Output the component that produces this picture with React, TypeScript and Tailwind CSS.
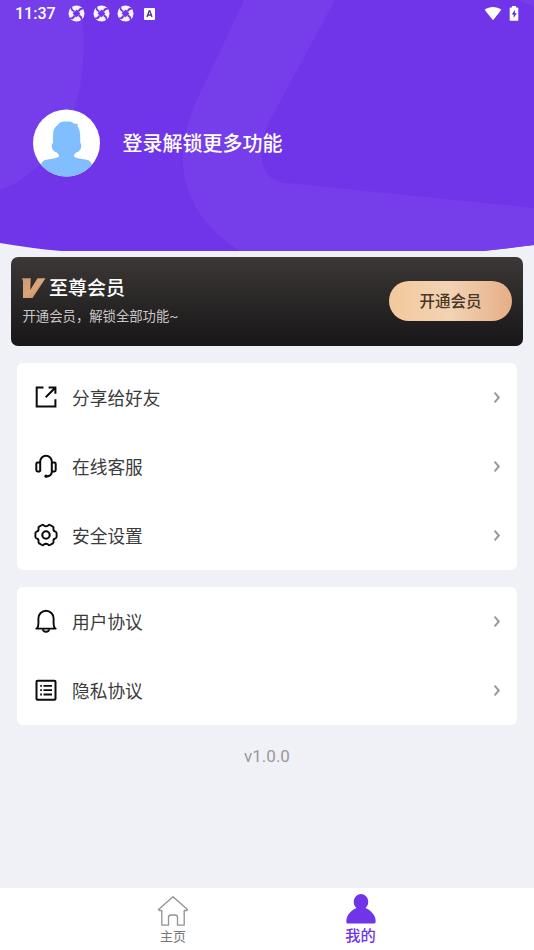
import type { ReactNode } from "react";

type MenuItem = {
  label: string;
  icon: ReactNode;
};

const ShareIcon = () => (
  <svg className="h-6 w-6" viewBox="0 0 24 24" fill="none" stroke="#0a0a0a" strokeWidth="2">
    <path d="M9.5 2.6H2.7v18.9h18.7v-7.2" />
    <path d="M11.7 12.2 21 3M14.6 2.6h6.8v6.2" />
  </svg>
);

const HeadsetIcon = () => (
  <svg className="h-6 w-6" viewBox="0 0 24 24" fill="none" stroke="#0a0a0a" strokeWidth="2">
    <path d="M6.2 17.8V7.6a5.8 5.8 0 0 1 11.6 0v10.2c0 2.8-1.7 4.5-5.4 4.6" />
    <path d="M6 8.6H3.6a1.3 1.3 0 0 0-1.3 1.3v6.2a1.3 1.3 0 0 0 1.3 1.3H6M18 8.6h2.4a1.3 1.3 0 0 1 1.3 1.3v6.2a1.3 1.3 0 0 1-1.3 1.3H18" />
    <circle cx="12" cy="22.2" r="1.6" fill="#0a0a0a" stroke="none" />
  </svg>
);

const GearIcon = () => (
  <svg className="h-6 w-6" viewBox="0 0 24 24" fill="none" stroke="#0a0a0a" strokeWidth="1.9" strokeLinejoin="round">
    <path d="M8 2Q9 1.5 9.8 2.4Q12 4.2 14.2 2.4Q15 1.5 16 2L18.8 3.6Q19.9 4.4 19.5 5.6Q19 8 21.4 8.7Q22.6 9.1 22.6 10.3V13.7Q22.6 14.9 21.4 15.3Q19 16 19.5 18.4Q19.9 19.6 18.8 20.4L16 22Q15 22.5 14.2 21.6Q12 19.8 9.8 21.6Q9 22.5 8 22L5.2 20.4Q4.1 19.6 4.5 18.4Q5 16 2.6 15.3Q1.4 14.9 1.4 13.7V10.3Q1.4 9.1 2.6 8.7Q5 8 4.5 5.6Q4.1 4.4 5.2 3.6Z" />
    <circle cx="12" cy="12" r="3.7" strokeWidth="2.1" />
  </svg>
);

const BellIcon = () => (
  <svg className="h-6 w-6" viewBox="0 0 24 24" fill="none" stroke="#0a0a0a" strokeWidth="1.9">
    <path d="M2.3 19.6h19.4" strokeLinecap="round" />
    <path d="M3 19.4C4.3 17.8 4.4 16.4 4.4 14.4V9.4a7.6 7.6 0 0 1 15.2 0v5c0 2 .1 3.4 1.4 5" />
    <path d="M9 20.3a3 2.5 0 0 0 6 0" />
  </svg>
);

const ListIcon = () => (
  <svg className="h-6 w-6" viewBox="0 0 24 24" fill="none" stroke="#0a0a0a" strokeWidth="2">
    <rect x="2.5" y="2.7" width="19" height="19" rx="1" />
    <path d="M6.2 7.9h1.7M9.5 7.9H18M6.2 12.2h1.7M9.5 12.2H18M6.2 16.5h1.7M9.5 16.5H18" strokeWidth="1.8" />
  </svg>
);

const SwirlIcon = () => (
  <svg className="h-[17px] w-[17px]" viewBox="0 0 17 17">
    <circle cx="8.5" cy="8.5" r="8" fill="#f8f4ff" />
    <g fill="#7035e8" transform="rotate(38 8.5 8.5)">
      <rect x="5.7" y="5.7" width="5.6" height="5.6" transform="rotate(12 8.5 8.5)" />
      <path d="M8.2 6 9.7 5.2Q8.8 2.7 11.4.7L9.6.3Q6.4 2.4 8.2 6Z" />
      <path d="M11 8.2 11.8 9.7Q14.3 8.8 16.3 11.4L16.7 9.6Q14.6 6.4 11 8.2Z" />
      <path d="M8.8 11 7.3 11.8Q8.2 14.3 5.6 16.3L7.4 16.7Q10.6 14.6 8.8 11Z" />
      <path d="M6 8.8 5.2 7.3Q2.7 8.2.7 5.6L.3 7.4Q2.4 10.6 6 8.8Z" />
    </g>
  </svg>
);

const serviceItems: MenuItem[] = [
  { label: "分享给好友", icon: <ShareIcon /> },
  { label: "在线客服", icon: <HeadsetIcon /> },
  { label: "安全设置", icon: <GearIcon /> },
];

const agreementItems: MenuItem[] = [
  { label: "用户协议", icon: <BellIcon /> },
  { label: "隐私协议", icon: <ListIcon /> },
];

const StatusBar = () => (
  <div className="flex h-[27px] items-center justify-between pl-[15px] pr-[15px] text-white">
    <div className="flex items-center">
      <span className="w-[53px] pt-px text-[16px] font-medium leading-[26px]">11:37</span>
      <div className="flex items-center gap-[7.5px]">
        <SwirlIcon />
        <SwirlIcon />
        <SwirlIcon />
      </div>
      <svg className="ml-[10px] h-3 w-[11px]" viewBox="0 0 11 12">
        <rect width="11" height="12" rx="1" fill="#fff" />
        <path d="M3 9 5.1 3h.8L8 9M3.9 7h3.2" fill="none" stroke="#553099" strokeWidth="1.3" />
      </svg>
    </div>
    <div className="flex items-center gap-[7px]">
      <svg className="h-[14px] w-[18px]" viewBox="0 0 18 14">
        <path d="M.6 2.7C5.6-.9 12.4-.9 17.4 2.7L9 13.2Z" fill="#fff" />
      </svg>
      <svg className="h-4 w-[10px]" viewBox="0 0 10 16">
        <path d="M3 0h4v1.4h1.4q.9 0 .9.9v11.6q0 .9-.9.9H1.6q-.9 0-.9-.9V2.3q0-.9.9-.9H3Z" fill="#fff" />
        <path d="M6 3.7 2.8 8.5h1.9v3.6l3-4.9H5.8Z" fill="#5b2fc4" />
      </svg>
    </div>
  </div>
);

const Header = () => (
  <div className="relative h-[251px]">
    <svg className="absolute inset-0 h-full w-full" viewBox="0 0 534 251">
      <path d="M0 0H534V245Q510 248 483 251H61Q29 248 0 243Z" fill="#7035e8" />
      <path d="M0 0H80C89 60 83 135 31 172Q17 184 0 190Z" fill="#763eea" />
      <path
        d="M244 0H335L270 120C256 150 258 181 287 183L534 208V245Q510 248 483 251H240C203 228 185 197 183 164C182 135 190 112 208 77Z"
        fill="#763eea"
      />
      <path d="M518 0H534V7Z" fill="#763eea" />
    </svg>
    <div className="relative">
      <StatusBar />
      <div className="flex items-center pl-[33px] pt-[82px]">
        <svg className="h-[68px] w-[67px]" viewBox="0 0 67 68">
          <clipPath id="avatar">
            <ellipse cx="33.5" cy="34" rx="33.5" ry="33.5" />
          </clipPath>
          <g clipPath="url(#avatar)">
            <rect width="67" height="68" fill="#fff" />
            <path
              d="M20 31Q19.5 22 22 18.5L25.5 15Q27 12.5 31 12.5L37 12.5Q39 13 41 14.5L45 15L44.3 17Q47.5 20 47.3 31V34Q48.8 35 48 39Q46.5 43 43.5 43.3L41 46V47.5Q43 49.5 54 50.8Q58.5 52 59 57V68H8V57Q8 52 13 50.8Q24 49.5 26 47.5V46L23.5 43.3Q20.5 43 19 39Q18.2 35 20 34Z"
              fill="#81beff"
            />
          </g>
        </svg>
        <h1 className="ml-[22.5px] pt-px text-[20px] font-medium leading-7 text-white">登录解锁更多功能</h1>
      </div>
    </div>
  </div>
);

const VipCard = () => (
  <div className="mx-[11px] mt-[6px] flex h-[89px] items-start justify-between rounded-[7px] bg-linear-to-b from-[#3c3837] to-[#181617] pl-[11px] pr-[11px]">
    <div className="pt-[18px]">
      <div className="flex items-center">
        <svg className="mb-[2px] h-5 w-6" viewBox="0 0 24 20">
          <defs>
            <linearGradient id="vip" x1="0" y1="0" x2="1" y2="1">
              <stop offset="0" stopColor="#c9986f" />
              <stop offset="0.5" stopColor="#dca579" />
              <stop offset="1" stopColor="#b98961" />
            </linearGradient>
          </defs>
          <path d="M0 .3H8.8L8.2 12 15.5.3H23.5L10.5 20H1V3.2Z" fill="url(#vip)" />
        </svg>
        <h2 className="ml-[3px] text-[19px] font-medium leading-7 text-white">至尊会员</h2>
      </div>
      <p className="ml-[0.5px] mt-[4px] text-[13.35px] leading-5 text-[#c9c7c7]">开通会员，解锁全部功能~</p>
    </div>
    <button className="mt-6 h-[40px] w-[123px] rounded-full bg-linear-to-r from-[#f3c99c] via-[#f2d3b3] via-50% to-[#e6ae87] pt-[4px] text-[15.5px] font-medium text-[#493627]">
      开通会员
    </button>
  </div>
);

const MenuCard = ({ items }: { items: MenuItem[] }) => (
  <div className="mx-[17px] mt-[17px] rounded-[6px] bg-white">
    {items.map((item) => (
      <div key={item.label} className="flex h-[69px] items-center pb-px pl-[17px] pr-[16px]">
        {item.icon}
        <span className="ml-[14px] flex-1 pt-[3px] text-[17.7px] leading-7 text-[#3b3b3b]">{item.label}</span>
        <svg className="h-3 w-2" viewBox="0 0 8 12" fill="none" stroke="#999" strokeWidth="2">
          <path d="M1.6 1.7 5.8 6.5 1.6 11.3" />
        </svg>
      </div>
    ))}
  </div>
);

const TabBar = () => (
  <div className="flex h-[62px] justify-center bg-white">
    <div className="flex w-[188px] flex-col items-center pt-[7px] text-[#777]">
      <svg className="h-8 w-8" viewBox="0 0 32 32" fill="none" stroke="#929292" strokeWidth="1.3" strokeLinejoin="round">
        <path d="M16 1.8 1.5 14.5 2.2 15.5H4.8V30.2H11.5V22.5Q11.5 20 14 20H18Q20.5 20 20.5 22.5V30.2H27.2V15.5H29.8L30.5 14.5Z" />
      </svg>
      <span className="text-[13px] leading-5">主页</span>
    </div>
    <div className="mr-[1px] flex w-[187px] flex-col items-center pt-[6px] text-[#7035e8]">
      <svg className="h-[30px] w-[30px]" viewBox="0 0 30 30" fill="currentColor">
        <path d="M1.5 29.5C0 29.5 .1 26 1 23.5C2.6 19 6.5 15.5 10.5 14C5.4 10 7.6 0 15 0S24.6 10 19.5 14C23.5 15.5 27.4 19 29 23.5C29.9 26 30 29.5 28.5 29.5Z" />
      </svg>
      <span className="pt-px text-[15.3px] font-medium leading-[22px]">我的</span>
    </div>
  </div>
);

const App = () => {
  return (
    <div className="flex h-screen flex-col bg-[#f0f1f7] font-[Roboto,'Noto_Sans_CJK_SC',sans-serif]">
      <Header />
      <VipCard />
      <MenuCard items={serviceItems} />
      <MenuCard items={agreementItems} />
      <p className="mt-[19px] flex-1 text-center text-[17px] leading-6 text-[#999]">v1.0.0</p>
      <TabBar />
    </div>
  );
};

export default App;
